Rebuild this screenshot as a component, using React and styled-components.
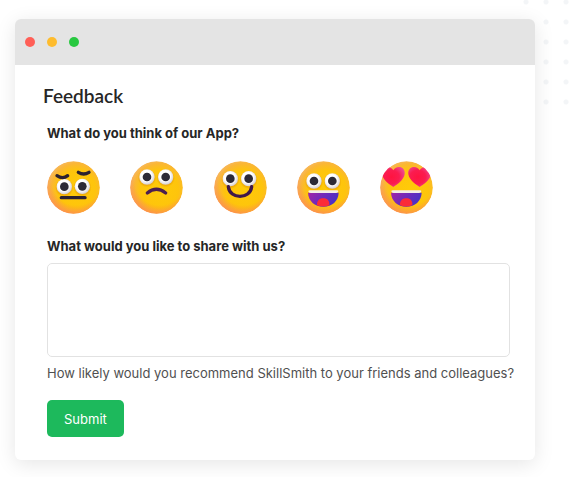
import { useState } from "react";
import styled, { createGlobalStyle } from "styled-components";

const GlobalStyle = createGlobalStyle`
  * {
    box-sizing: border-box;
  }

  body {
    margin: 0;
    background-color: #fff;
    color: #262626;
    font-family: Inter, "Liberation Sans", sans-serif;
    font-size: 13px;
    line-height: 20px;
  }
`;

const Page = styled.main`
  position: relative;
  padding: 19px 34px 17px 15px;
  overflow: hidden;
`;

const DotPattern = styled.div`
  position: absolute;
  top: -8px;
  right: -7px;
  width: 60px;
  height: 120px;
  background-image: radial-gradient(circle, #f3f5f7 2px, transparent 3px);
  background-size: 20px 20px;
`;

const Window = styled.section`
  position: relative;
  background-color: #fff;
  border-radius: 6px;
  box-shadow: 0 4px 20px rgba(0, 0, 0, 0.1);
  overflow: hidden;
`;

const TitleBar = styled.header`
  display: flex;
  align-items: center;
  gap: 12px;
  height: 46px;
  padding: 0 10px;
  background-color: #e4e4e4;
`;

const WindowDot = styled.span`
  width: 10px;
  height: 10px;
  border-radius: 50%;
  background-color: ${({ $color }) => $color};
`;

const Body = styled.div`
  padding: 19px 20px 23px 28px;
`;

const Title = styled.h1`
  margin: 0 0 15px;
  font-family: Lato, "Open Sans", sans-serif;
  font-size: 19px;
  font-weight: 600;
  line-height: 24px;
`;

const Form = styled.form`
  display: flex;
  flex-direction: column;
  align-items: flex-start;
  padding-left: 4px;
`;

const Question = styled.label`
  font-weight: 700;
`;

const Ratings = styled.div`
  display: flex;
  justify-content: space-between;
  width: 100%;
  max-width: 386px;
  margin: 18px 0 22px;
`;

const Rating = styled.label`
  position: relative;
  width: 53px;
  height: 53px;
  cursor: pointer;

  input {
    position: absolute;
    inset: 0;
    width: 100%;
    height: 100%;
    margin: 0;
    opacity: 0;
    cursor: pointer;
  }

  svg {
    display: block;
    width: 100%;
    height: 100%;
    border-radius: 50%;
  }

  input:focus-visible + svg {
    outline: 2px solid #1db95c;
  }
`;

const Comment = styled.textarea`
  width: calc(100% - 5px);
  height: 94px;
  margin: 7px 0 6px;
  padding: 10px 12px;
  border: 1px solid #e2e2e2;
  border-radius: 5px;
  background-color: #fff;
  color: inherit;
  font: inherit;
  resize: none;
`;

const Hint = styled.p`
  margin: 0 0 17px;
  color: #505050;
`;

const SubmitButton = styled.button`
  height: 37px;
  padding: 0 17px;
  border: none;
  border-radius: 5px;
  background-color: #1db95c;
  color: #fff;
  font: inherit;
  cursor: pointer;
`;

const HiddenSvg = styled.svg`
  position: absolute;
  width: 0;
  height: 0;
`;

function EmojiDefs() {
  return (
    <HiddenSvg aria-hidden="true">
      <defs>
        <radialGradient id="face" cx="0.56" cy="0.53" r="0.58">
          <stop offset="0" stopColor="#ffcb08" />
          <stop offset="0.62" stopColor="#fec40c" />
          <stop offset="0.84" stopColor="#fab636" />
          <stop offset="1" stopColor="#f6b868" />
        </radialGradient>
        <radialGradient id="blush" cx="0.56" cy="0.36" r="0.7">
          <stop offset="0.68" stopColor="#ff7a50" stopOpacity="0" />
          <stop offset="0.86" stopColor="#ff8050" stopOpacity="0.45" />
          <stop offset="1" stopColor="#ff7668" stopOpacity="0.8" />
        </radialGradient>
        <radialGradient id="eye" cx="0.45" cy="0.42" r="0.58">
          <stop offset="0.6" stopColor="#fff" />
          <stop offset="1" stopColor="#d5cfd2" />
        </radialGradient>
        <radialGradient id="eyeShade">
          <stop offset="0.7" stopColor="#d98200" stopOpacity="0.5" />
          <stop offset="1" stopColor="#d98200" stopOpacity="0" />
        </radialGradient>
        <linearGradient id="mouth" x1="0" y1="0" x2="1" y2="0.4">
          <stop offset="0" stopColor="#a323a6" />
          <stop offset="0.55" stopColor="#6c2abc" />
          <stop offset="1" stopColor="#4931c4" />
        </linearGradient>
        <radialGradient id="heart" cx="0.42" cy="0.5" r="0.62">
          <stop offset="0" stopColor="#ff1440" />
          <stop offset="0.55" stopColor="#fb1c50" />
          <stop offset="1" stopColor="#ee4a94" />
        </radialGradient>
      </defs>
    </HiddenSvg>
  );
}

function Eye({ x, y }) {
  return (
    <g>
      <circle cx={x} cy={y + 3} r="28" fill="url(#eyeShade)" />
      <circle cx={x} cy={y} r="23" fill="url(#eye)" />
      <circle cx={x} cy={y} r="13" fill="#2c2a36" />
    </g>
  );
}

function Face({ children }) {
  return (
    <svg viewBox="0 0 159 159" aria-hidden="true">
      <circle cx="79.5" cy="79.5" r="79" fill="url(#face)" />
      <circle cx="79.5" cy="79.5" r="79" fill="url(#blush)" />
      {children}
    </svg>
  );
}

function Stroke({ d, color = "#2d2230" }) {
  return (
    <path d={d} fill="none" stroke={color} strokeWidth="10" strokeLinecap="round" />
  );
}

function OpenMouth() {
  return (
    <g>
      <path d="M33 95 H125 C124 120 105 137 79 137 C53 137 34 120 33 95 Z" fill="url(#mouth)" />
      <path d="M60 133 C59 120 66 112 79 112 C92 112 98 120 97 133 C85 138 72 138 60 133 Z" fill="#fb2b38" />
      <path d="M34 91 Q34 88 39 88 H119 Q124 88 124 91 Q123 96 117 96 H41 Q35 96 34 91 Z" fill="#f3ece6" />
    </g>
  );
}

const heartPath =
  "M35 61 C26 55 4 42 1 23 C-1 9 8 1 18 1 C26 1 32 5 35 11 C38 5 44 1 52 1 C62 1 71 9 69 23 C66 42 44 55 35 61 Z";

const moods = [
  {
    name: "Unimpressed",
    drawing: (
      <Face>
        <Eye x={52} y={77} />
        <Eye x={106} y={76} />
        <Stroke d="M30 44 Q47 56 62 44" />
        <Stroke d="M94 34 Q110 44 126 34" />
        <Stroke d="M43 110 H114" />
      </Face>
    ),
  },
  {
    name: "Sad",
    drawing: (
      <Face>
        <Eye x={51} y={48} />
        <Eye x={107} y={48} />
        <Stroke d="M52 96 Q79 74 107 96" color="#4c1f50" />
      </Face>
    ),
  },
  {
    name: "Happy",
    drawing: (
      <Face>
        <Eye x={49} y={53} />
        <Eye x={104} y={53} />
        <Stroke d="M43 77 C48 116 108 116 113 77" color="#40184a" />
      </Face>
    ),
  },
  {
    name: "Excited",
    drawing: (
      <Face>
        <Eye x={51} y={60} />
        <Eye x={106} y={60} />
        <OpenMouth />
      </Face>
    ),
  },
  {
    name: "In love",
    drawing: (
      <Face>
        <path d={heartPath} transform="translate(5 17)" fill="url(#heart)" />
        <path d={heartPath} transform="translate(84 17)" fill="url(#heart)" />
        <OpenMouth />
      </Face>
    ),
  },
];

function App() {
  const [mood, setMood] = useState("");
  const [comment, setComment] = useState("");

  const submitHandler = (e) => {
    e.preventDefault();
    setMood("");
    setComment("");
  };

  return (
    <>
      <GlobalStyle />
      <EmojiDefs />
      <Page>
        <DotPattern />
        <Window>
          <TitleBar>
            <WindowDot $color="#ff5f57" />
            <WindowDot $color="#febc2e" />
            <WindowDot $color="#28c840" />
          </TitleBar>
          <Body>
            <Title>Feedback</Title>
            <Form onSubmit={submitHandler}>
              <Question as="span" id="mood-question">
                What do you think of our App?
              </Question>
              <Ratings role="radiogroup" aria-labelledby="mood-question">
                {moods.map(({ name, drawing }) => (
                  <Rating key={name}>
                    <input
                      type="radio"
                      name="mood"
                      aria-label={name}
                      checked={mood === name}
                      onChange={() => setMood(name)}
                    />
                    {drawing}
                  </Rating>
                ))}
              </Ratings>
              <Question htmlFor="comment">What would you like to share with us?</Question>
              <Comment
                id="comment"
                aria-describedby="comment-hint"
                value={comment}
                onChange={(e) => setComment(e.target.value)}
              />
              <Hint id="comment-hint">
                How likely would you recommend SkillSmith to your friends and colleagues?
              </Hint>
              <SubmitButton type="submit">Submit</SubmitButton>
            </Form>
          </Body>
        </Window>
      </Page>
    </>
  );
}

export default App;
